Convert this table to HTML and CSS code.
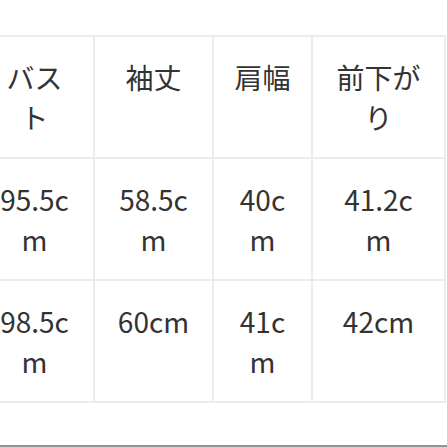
FILE: index.html
```html
<!DOCTYPE html>
<html lang="ja">
<head>
<meta charset="utf-8">
<link rel="stylesheet" href="styles.css">
</head>
<body>
<div class="page">
  <div class="size-table">
    <div class="cell">バスト</div>
    <div class="cell">袖丈</div>
    <div class="cell">肩幅</div>
    <div class="cell">前下がり</div>
    <div class="cell">95.5cm</div>
    <div class="cell">58.5cm</div>
    <div class="cell">40cm</div>
    <div class="cell">41.2cm</div>
    <div class="cell">98.5cm</div>
    <div class="cell">60cm</div>
    <div class="cell">41cm</div>
    <div class="cell">42cm</div>
  </div>
  <div class="divider"></div>
</div>
</body>
</html>
```
FILE: styles.css
```css
html, body {
  margin: 0;
  padding: 0;
  background: #fff;
}
body {
  width: 447px;
  height: 447px;
  overflow: hidden;
  font-family: "Noto Sans CJK JP", "Noto Sans", sans-serif;
  color: #333;
}
.page {
  padding-top: 35px;
}
.size-table {
  display: grid;
  grid-template-columns: 117px 117px 97px 131px;
  grid-auto-rows: 120px;
  gap: 2px;
  padding: 2px;
  background: #ececec;
  width: max-content;
  margin-left: -26px;
}
.cell {
  background: #fff;
  box-sizing: border-box;
  padding: 20px 20px;
  font-size: 28px;
  line-height: 40px;
  text-align: center;
  word-break: break-all;
}
.divider {
  margin-top: 42px;
  height: 3px;
  background: #949494;
}
```
